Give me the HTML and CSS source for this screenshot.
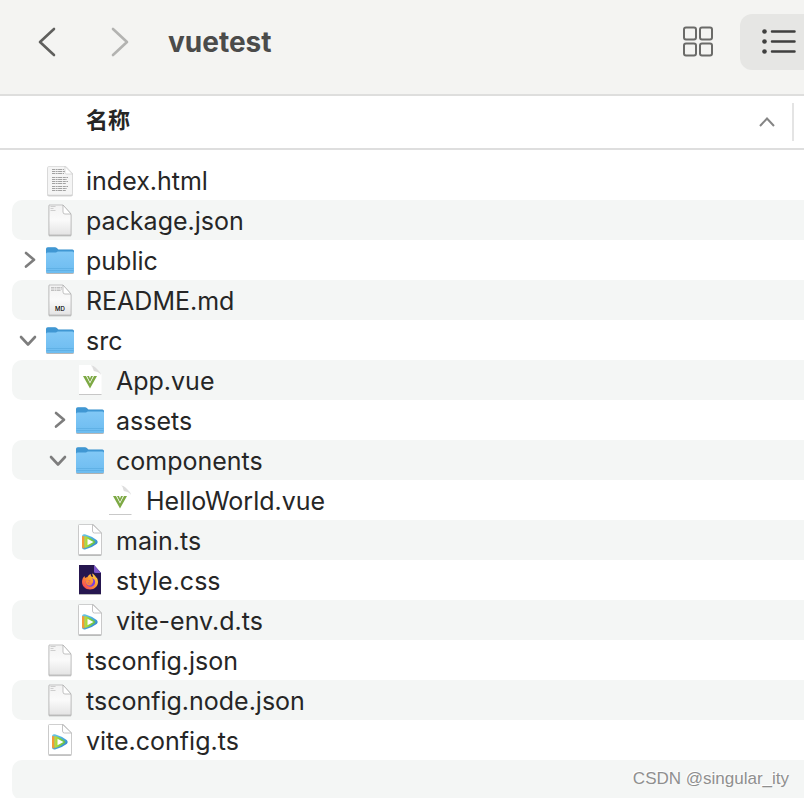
FILE: index.html
```html
<!DOCTYPE html>
<html lang="zh-CN">

<head>
    <meta charset="utf-8">
    <meta name="viewport" content="width=device-width, initial-scale=1">
    <title>vuetest</title>
    <link rel="stylesheet" href="styles.css">
</head>

<body>
    <!-- shared icons -->
    <svg class="sprite" aria-hidden="true">
        <defs>
            <linearGradient id="paper" x1="0" y1="0" x2="0" y2="1">
                <stop offset="0" stop-color="#f2f2f2"/>
                <stop offset="0.5" stop-color="#fafafa"/>
                <stop offset="1" stop-color="#e4e4e4"/>
            </linearGradient>
            <linearGradient id="folderFront" x1="0" y1="0" x2="0" y2="1">
                <stop offset="0" stop-color="#82c8f6"/>
                <stop offset="1" stop-color="#6cbcf0"/>
            </linearGradient>
            <linearGradient id="play" x1="0" y1="0" x2="1" y2="1">
                <stop offset="0" stop-color="#6fc9e6"/>
                <stop offset="0.5" stop-color="#4aa9dc"/>
                <stop offset="1" stop-color="#2a76c4"/>
            </linearGradient>
            <linearGradient id="playInner" x1="0" y1="0" x2="1" y2="0">
                <stop offset="0" stop-color="#c4d93a"/>
                <stop offset="0.4" stop-color="#8fd43c"/>
                <stop offset="1" stop-color="#61bd4a"/>
            </linearGradient>
            <linearGradient id="fire" x1="1" y1="0" x2="0" y2="1">
                <stop offset="0" stop-color="#ffe14a"/>
                <stop offset="0.45" stop-color="#ff9a2e"/>
                <stop offset="1" stop-color="#f5315f"/>
            </linearGradient>
            <filter id="shade" x="-20%" y="-20%" width="140%" height="140%">
                <feDropShadow dx="0" dy="0.7" stdDeviation="0.7" flood-color="#000" flood-opacity="0.4"/>
            </filter>
        </defs>

        <symbol id="icon-html" viewBox="0 0 32 40">
            <path d="M5 6.500h17l6.500 7v20q0 1.500-1.500 1.500H5q-1.500 0-1.500-1.500V8q0-1.500 1.500-1.500z" fill="#f5f5f5" stroke="#d4d4d4" stroke-width=".6" filter="url(#shade)"/>
            <path d="M8 9.500h12M8 11.500h13M8 13.500h12M8 17.500h16M8 19.500h15M8 21.500h16M8 23.500h14M8 26.500h16M8 28.500h15M8 30.500h14" stroke="#a2a2a2" stroke-width="1" stroke-dasharray="3 .6 2 .5 4 .7"/>
            <path d="M21 6.500v6q0 1.500 1.500 1.500h6z" fill="#fff" stroke="#c6c6c6" stroke-width=".6"/>
        </symbol>

        <symbol id="icon-file" viewBox="0 0 32 40">
            <path d="M5 5h14l8 9v21H5z" fill="url(#paper)" stroke="#a9a9a9" stroke-width=".6" filter="url(#shade)"/>
            <path d="M6.500 6.500h5M6.500 8.500h3M6.500 10.500h5" stroke="#bdbdbd" stroke-width=".7"/>
            <path d="M19 5v7q0 2 2 2h6z" fill="#fff" stroke="#aaa" stroke-width=".7"/>
        </symbol>

        <symbol id="icon-folder" viewBox="0 0 32 40">
            <g filter="url(#shade)">
                <path d="M2 9q0-1.800 1.800-1.800h7.200q1 0 1.800.8l1.600 1.400h14q1.600 0 1.600 1.600v8H2z" fill="#3f97d3"/>
                <path d="M2 14q0-1.500 1.500-1.500h8.500l1.800-1h14.700q1.500 0 1.500 1.500v18.500q0 1.500-1.500 1.500h-25Q2 33 2 31.500z" fill="url(#folderFront)"/>
            </g>
            <path d="M2.500 28.500h27M2.500 30.500h27" stroke="#56a8dd" stroke-width=".6"/>
        </symbol>

        <symbol id="icon-vue" viewBox="0 0 32 40">
            <path d="M5 5h12q1 5 5 5.500 4 .5 5.500 4V34H5z" fill="#fff"/>
            <path d="M17 5.500q2.500 0 4.500 2l3.500 3.500q2 2 2 4-1.500-3-5.500-3.500-2.500-.5-2.500-3 0-2-2-3z" fill="#dedede"/>
            <path d="M5 34.500h22.500" stroke="#bbb" stroke-width=".8"/>
            <path d="M9 16h3l4 7.500 4-7.500h3l-7 12.500z" fill="#7da944"/>
            <path d="M13 16h2l1 2.500 1-2.500h2l-3 6z" fill="#7da944"/>
        </symbol>

        <symbol id="icon-ts" viewBox="0 0 32 40">
            <path d="M5.500 4.500h14L27.500 13v20.500q0 1-1 1h-21q-1 0-1-1v-28q0-1 1-1z" fill="#fff" stroke="#bdbdbd" stroke-width=".7" filter="url(#shade)"/>
            <path d="M18.500 4.500v6.500q0 2 2 2h7z" fill="#fff" stroke="#b5b5b5" stroke-width=".8"/>
            <path d="M8 17q0-3.500 3-2.700 7 2 12 6 1.500 1.700 0 3.400-5 4-12 5.800-3 .5-3-2.500z" fill="url(#play)"/>
            <path d="M8 17q0-1.500 2.500-.5v11.800q-2 .7-2.500-1.300z" fill="#f39b35"/>
            <path d="M10.500 17.500q0-1.700 1.500-1.200 5 1.500 8.800 4.700 1 1 0 2-3.800 3.200-8.800 4.700-1.500.3-1.500-1.200z" fill="url(#playInner)"/>
            <path d="M13.500 18.700l6 3.300-6 3.300z" fill="#fff"/>
        </symbol>

        <symbol id="icon-firefox" viewBox="0 0 32 40">
            <path d="M5 5h15l7 8v21H5z" fill="#25164f" filter="url(#shade)"/>
            <path d="M20 5v6.500q0 1.500 1.500 1.500H27z" fill="#7c57c9"/>
            <path d="M16 29.500c-4.500 0-8-3.200-8-7.500 0-2.600 1-4.500 2.500-6l.5 2c.8-.7 1.500-.8 2.300-.7.7-1.700 2-2.500 3.400-3.300-.2 2 .8 2.700 2.300 3.300-.1-1.300-.4-2.500-1-3.800 2.300 1 3.600 2.500 4.200 4.500l.5-.8c.9 1.600 1.300 3.200 1.300 4.800 0 4.300-3.500 7.500-8 7.500z" fill="url(#fire)"/>
            <path d="M12 20.500c1.500-1 3 .2 4.300.3l-1 1.500-1.800.5c.8 1.700 3.500 2 5 .5 1.300-1.700.8-3.800-.7-5 3 .7 3.700 3 3.200 5-.6 2.500-2.900 3.600-5.100 3.400-2.900-.2-5.100-3.500-3.900-6.200z" fill="#7a3ee0"/>
            <path d="M12 20.500c1.500-1 3 .2 4.300.3l-1 1.500-1.800.5c.8 1.700 3.500 2 5 .5-.8 2-2.300 2.500-3.900 2.200-2-.4-3.200-2.700-2.600-5z" fill="#ff8a35"/>
        </symbol>

        <symbol id="icon-closed" viewBox="0 0 32 40">
            <path d="M14 13l8 6.800-8 6.800" class="arrow"/>
        </symbol>
        <symbol id="icon-open" viewBox="0 0 32 40">
            <path d="M9 17l7 7.500 7-7.500" class="arrow"/>
        </symbol>
    </svg>

    <header class="toolbar">
        <button class="nav" type="button" aria-label="返回">
            <svg width="24" height="32" viewBox="0 0 24 32"><path d="M18 3L4 16l14 13"/></svg>
        </button>
        <button class="nav forward" type="button" aria-label="前进">
            <svg width="24" height="32" viewBox="0 0 24 32"><path d="M5 3l14 13L5 29"/></svg>
        </button>
        <h1>vuetest</h1>
        <button class="view" type="button" aria-label="图标">
            <svg width="32" height="32" viewBox="0 0 32 32" fill="none" stroke="#6b6b69" stroke-width="2">
                <rect x="2" y="1.500" width="12" height="12" rx="2"/>
                <rect x="18" y="1.500" width="12" height="12" rx="2"/>
                <rect x="2" y="17.500" width="12" height="12" rx="2"/>
                <rect x="18" y="17.500" width="12" height="12" rx="2"/>
            </svg>
        </button>
        <button class="view selected" type="button" aria-label="列表">
            <svg width="34" height="28" viewBox="0 0 34 28" fill="#3f3f3e">
                <circle cx="2.500" cy="3.500" r="2.300"/>
                <circle cx="2.500" cy="13.500" r="2.300"/>
                <circle cx="2.500" cy="23.500" r="2.300"/>
                <path d="M10 3.500h22.500M10 13.500h22.500M10 23.500h22.500" stroke="#3f3f3e" stroke-width="2.500" stroke-linecap="round"/>
            </svg>
        </button>
    </header>

    <div class="columns">
        <span>名称</span>
        <svg width="18" height="12" viewBox="0 0 18 12"><path d="M2 10l7-7.500L16 10" fill="none" stroke="#858585" stroke-width="2"/></svg>
    </div>

    <ul class="files">
        <li><svg class="icon"><use href="#icon-html"/></svg><span>index.html</span></li>
        <li><svg class="icon"><use href="#icon-file"/></svg><span>package.json</span></li>
        <li><button type="button" aria-label="展开 public"><svg><use href="#icon-closed"/></svg></button><svg class="icon"><use href="#icon-folder"/></svg><span>public</span></li>
        <li>
            <svg class="icon" viewBox="0 0 32 40">
                <path d="M5 5h14l8 9v21H5z" fill="url(#paper)" stroke="#a9a9a9" stroke-width=".6" filter="url(#shade)"/>
                <path d="M7 7.500h11M7 9h11M7 10.500h10" stroke="#aaa" stroke-width=".7" stroke-dasharray="3 .5 2 .5"/>
                <path d="M19 5v7q0 2 2 2h6z" fill="#fff" stroke="#aaa" stroke-width=".7"/>
                <text x="16" y="31" class="badge">MD</text>
            </svg>
            <span>README.md</span>
        </li>
        <li><button type="button" aria-label="收起 src"><svg><use href="#icon-open"/></svg></button><svg class="icon"><use href="#icon-folder"/></svg><span>src</span></li>
        <li class="level-1"><svg class="icon"><use href="#icon-vue"/></svg><span>App.vue</span></li>
        <li class="level-1"><button type="button" aria-label="展开 assets"><svg><use href="#icon-closed"/></svg></button><svg class="icon"><use href="#icon-folder"/></svg><span>assets</span></li>
        <li class="level-1"><button type="button" aria-label="收起 components"><svg><use href="#icon-open"/></svg></button><svg class="icon"><use href="#icon-folder"/></svg><span>components</span></li>
        <li class="level-2"><svg class="icon"><use href="#icon-vue"/></svg><span>HelloWorld.vue</span></li>
        <li class="level-1"><svg class="icon"><use href="#icon-ts"/></svg><span>main.ts</span></li>
        <li class="level-1"><svg class="icon"><use href="#icon-firefox"/></svg><span>style.css</span></li>
        <li class="level-1"><svg class="icon"><use href="#icon-ts"/></svg><span>vite-env.d.ts</span></li>
        <li><svg class="icon"><use href="#icon-file"/></svg><span>tsconfig.json</span></li>
        <li><svg class="icon"><use href="#icon-file"/></svg><span>tsconfig.node.json</span></li>
        <li><svg class="icon"><use href="#icon-ts"/></svg><span>vite.config.ts</span></li>
        <li aria-hidden="true"></li>
    </ul>

    <div class="watermark">CSDN @singular_ity</div>
</body>

</html>
```

FILE: styles.css
```css
* {
    box-sizing: border-box;
}

body {
    position: relative;
    margin: 0;
    height: 100vh;
    overflow: hidden;
    background-color: #fff;
    color: #262626;
    font-family: Inter, "Noto Sans CJK SC", sans-serif;
}

button {
    padding: 0;
    border: none;
    background: none;
}

svg {
    display: block;
}

.sprite {
    position: absolute;
    width: 0;
    height: 0;
}

.badge {
    font-size: 6px;
    font-weight: 500;
    text-anchor: middle;
}

.arrow {
    fill: none;
    stroke: #7d7d7d;
    stroke-width: 2.6;
    stroke-linecap: round;
    stroke-linejoin: round;
}

/* toolbar */
.toolbar {
    display: flex;
    align-items: center;
    height: 96px;
    padding: 0 0 10px 36px;
    border-bottom: 2px solid #dededd;
    background-color: #f4f4f2;
}

.nav {
    margin-right: 48px;
}

.nav path {
    fill: none;
    stroke: #5f5f5d;
    stroke-width: 2.6;
    stroke-linecap: round;
    stroke-linejoin: round;
}

.nav.forward {
    margin-right: 36px;
}

.nav.forward path {
    stroke: #b3b3b1;
}

.toolbar h1 {
    flex: 1;
    margin: 0;
    color: #4b4b4a;
    font-size: 28px;
    font-weight: 700;
    line-height: 40px;
}

.view {
    display: flex;
    align-items: center;
    justify-content: center;
    height: 56px;
    margin-right: 26px;
}

.view.selected {
    width: 64px;
    margin-right: 0;
    padding-left: 14px;
    border-radius: 12px 0 0 12px;
    background-color: #e6e6e4;
}

/* column header */
.columns {
    display: flex;
    align-items: center;
    justify-content: space-between;
    height: 54px;
    padding: 0 28px 0 86px;
    border-bottom: 2px solid #dedede;
    background: linear-gradient(#e4e4e4, #e4e4e4) no-repeat right 10px center / 2px 38px;
    font-size: 22px;
    font-weight: 700;
}

.columns span {
    padding-bottom: 8px;
}

/* file list */
.files {
    margin: 0;
    padding: 10px 0 0 12px;
    list-style: none;
}

.files li {
    display: flex;
    align-items: center;
    height: 40px;
    padding-left: 32px;
    border-radius: 10px 0 0 10px;
    font-size: 25px;
    line-height: 40px;
}

.files li:nth-child(even) {
    background-color: #f4f6f5;
}

.files .level-1 {
    padding-left: 62px;
}

.files .level-2 {
    padding-left: 92px;
}

.files span {
    padding-top: 2px;
}

.files button {
    width: 32px;
    margin-left: -32px;
}

.files svg {
    flex: none;
    width: 32px;
    height: 40px;
}

.files .icon {
    margin-right: 10px;
}

.watermark {
    position: absolute;
    right: 15px;
    bottom: 8px;
    color: #8f8f8f;
    font-family: "Liberation Sans", sans-serif;
    font-size: 17px;
    line-height: 22px;
    text-shadow: -1px -1px 0 #fff;
}
```
